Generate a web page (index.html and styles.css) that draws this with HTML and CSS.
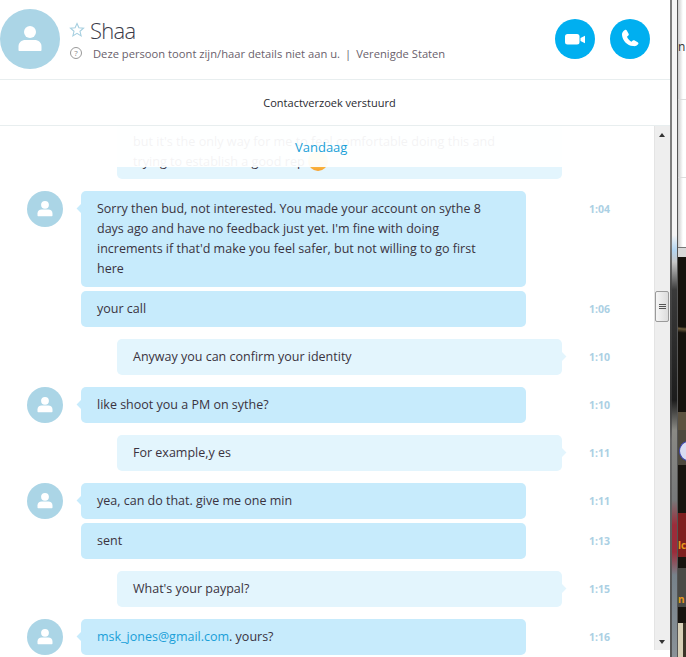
FILE: index.html
```html
<!DOCTYPE html>
<html>
<head>
    <meta charset="UTF-8">
    <title>Shaa</title>
    <link rel="stylesheet" href="styles.css">
</head>
<body>

<div class="window">
    <div class="chat">
        <div class="header">
            <div class="avatar big">
                <svg viewBox="0 0 60 60" width="60" height="60"><circle cx="30" cy="30" r="30" fill="#abd5e6"/><circle cx="30" cy="23" r="6" fill="#fff"/><path d="M18.5 41v-3.500c0-4 3-6.500 7-6.500h9c4 0 7 2.500 7 6.500V41c0 .6-.4 1-1 1h-21c-.6 0-1-.4-1-1z" fill="#fff"/></svg>
            </div>
            <div class="info">
                <div class="name-row">
                    <svg class="star" viewBox="0 0 16 16" width="16" height="16"><path d="M8 1.500l1.900 4.300 4.600.4-3.500 3.100 1.100 4.600L8 11.400l-4.100 2.500L5 9.300 1.500 6.200l4.600-.4z" fill="none" stroke="#a6cfe0" stroke-width="1.100"/></svg>
                    <span class="name">Shaa</span>
                </div>
                <div class="status-row">
                    <span class="help">?</span>
                    <span>Deze persoon toont zijn/haar details niet aan u.</span>
                    <span class="sep">|</span>
                    <span>Verenigde Staten</span>
                </div>
            </div>
            <div class="call-btn">
                <svg viewBox="0 0 40 40" width="40" height="40"><rect x="10" y="15" width="14.500" height="10.500" rx="2.500" fill="#fff"/><path d="M25.500 19l4.500-2.200v7.400L25.500 22z" fill="#fff"/></svg>
            </div>
            <div class="call-btn">
                <svg viewBox="0 0 40 40" width="40" height="40"><path d="M14.800 11c.8-.4 1.600-.2 2 .5l1.800 3.200c.4.700.2 1.400-.3 1.900l-1.300 1.200c.7 2 2.400 3.900 4.400 4.900l1.400-1.100c.6-.5 1.300-.5 1.900-.2l3 1.800c.8.500 1 1.400.4 2.100-1.200 1.400-3 2.200-5 1.800C17 26.500 12.500 21.500 12 16c-.2-2 .9-3.900 2.800-5z" fill="#fff"/></svg>
            </div>
        </div>
        <div class="request">Contactverzoek verstuurd</div>
        <div class="body">
            <div class="messages">
                <div class="earlier">
                    <div class="bubble me tall">but it's the only way for me to feel comfortable doing this and<br>trying to establish a good rep <span class="smiley"></span></div>
                </div>
                <div class="sticky-date">Vandaag</div>

                <div class="row">
                    <div class="avatar small"><svg viewBox="0 0 60 60" width="36" height="36"><circle cx="30" cy="30" r="30" fill="#abd5e6"/><circle cx="30" cy="23" r="6.500" fill="#fff"/><path d="M17.500 41v-3.500c0-4 3-6.500 7-6.500h11c4 0 7 2.500 7 6.500V41c0 .6-.4 1-1 1h-23c-.6 0-1-.4-1-1z" fill="#fff"/></svg></div>
                    <div class="bubble them tail">Sorry then bud, not interested. You made your account on sythe 8 days ago and have no feedback just yet. I'm fine with doing increments if that'd make you feel safer, but not willing to go first here</div>
                    <div class="time">1:04</div>
                </div>
                <div class="row near">
                    <div class="bubble them">your call</div>
                    <div class="time">1:06</div>
                </div>
                <div class="row mine">
                    <div class="bubble me tail">Anyway you can confirm your identity</div>
                    <div class="time">1:10</div>
                </div>
                <div class="row">
                    <div class="avatar small"><svg viewBox="0 0 60 60" width="36" height="36"><circle cx="30" cy="30" r="30" fill="#abd5e6"/><circle cx="30" cy="23" r="6.500" fill="#fff"/><path d="M17.500 41v-3.500c0-4 3-6.500 7-6.500h11c4 0 7 2.500 7 6.500V41c0 .6-.4 1-1 1h-23c-.6 0-1-.4-1-1z" fill="#fff"/></svg></div>
                    <div class="bubble them tail">like shoot you a PM on sythe?</div>
                    <div class="time">1:10</div>
                </div>
                <div class="row mine">
                    <div class="bubble me tail">For example,y es</div>
                    <div class="time">1:11</div>
                </div>
                <div class="row">
                    <div class="avatar small"><svg viewBox="0 0 60 60" width="36" height="36"><circle cx="30" cy="30" r="30" fill="#abd5e6"/><circle cx="30" cy="23" r="6.500" fill="#fff"/><path d="M17.500 41v-3.500c0-4 3-6.500 7-6.500h11c4 0 7 2.500 7 6.500V41c0 .6-.4 1-1 1h-23c-.6 0-1-.4-1-1z" fill="#fff"/></svg></div>
                    <div class="bubble them tail">yea, can do that. give me one min</div>
                    <div class="time">1:11</div>
                </div>
                <div class="row near">
                    <div class="bubble them">sent</div>
                    <div class="time">1:13</div>
                </div>
                <div class="row mine">
                    <div class="bubble me tail">What's your paypal?</div>
                    <div class="time">1:15</div>
                </div>
                <div class="row">
                    <div class="avatar small"><svg viewBox="0 0 60 60" width="36" height="36"><circle cx="30" cy="30" r="30" fill="#abd5e6"/><circle cx="30" cy="23" r="6.500" fill="#fff"/><path d="M17.500 41v-3.500c0-4 3-6.500 7-6.500h11c4 0 7 2.500 7 6.500V41c0 .6-.4 1-1 1h-23c-.6 0-1-.4-1-1z" fill="#fff"/></svg></div>
                    <div class="bubble them tail"><span class="link">msk_jones@gmail.com</span>. yours?</div>
                    <div class="time">1:16</div>
                </div>
            </div>
            <div class="scrollbar">
                <div class="arrow up"></div>
                <div class="track"><div class="thumb"><span></span><span></span><span></span></div></div>
                <div class="arrow down"></div>
            </div>
        </div>
    </div>
    <div class="edge"></div>
    <div class="glass"></div>
    <div class="edge-dark"></div>
    <!-- other windows showing behind the chat -->
    <div class="behind">
        <div class="pane first">n</div>
        <div class="pane second"></div>
        <div class="pane third"></div>
        <div class="pane band"></div>
        <div class="game-dark"></div>
        <div class="game-tan"></div>
        <div class="game-grey"><div class="badge"></div></div>
        <div class="game-black"></div>
        <div class="game-red"><span class="game-label">lc</span></div>
        <div class="game-gap"></div>
        <div class="game-slate"><span class="game-label">n</span></div>
        <div class="game-black short"></div>
        <div class="game-tile"></div>
    </div>
</div>

</body>
</html>
```

FILE: styles.css
```css
html, body {
    margin: 0;
    height: 100%;
    overflow: hidden;
}
body {
    font-family: "Open Sans", "Noto Sans", sans-serif;
    font-size: 12.5px;
    color: #3a3340;
    background-color: #fff;
}
.window {
    display: flex;
    width: 686px;
    height: 657px;
}
.chat {
    display: flex;
    flex-direction: column;
    width: 670px;
    height: 657px;
    flex: none;
    background-color: #fff;
}
.header {
    display: flex;
    align-items: center;
    height: 80px;
    box-sizing: border-box;
    border-bottom: 1px solid #e8eeef;
    padding: 0 20px 0 0;
    flex: none;
}
.avatar svg {
    display: block;
}
.avatar.big {
    width: 60px;
    height: 60px;
    margin-top: -1px;
}
.info {
    flex: 1;
    margin-left: 9px;
}
.name-row {
    display: flex;
    align-items: center;
    margin-top: -2px;
}
.star {
    margin-right: 5px;
}
.name {
    font-weight: 300;
    font-size: 22px;
    letter-spacing: -0.75px;
    line-height: 26px;
    color: #3a3a48;
}
.status-row {
    display: flex;
    align-items: center;
    margin-top: 3px;
    font-size: 11.2px;
    color: #6a5f6c;
}
.sep {
    margin: 0 5px;
}
.help {
    width: 10px;
    height: 10px;
    border: 1px solid #999;
    border-radius: 50%;
    font-size: 8px;
    line-height: 10px;
    text-align: center;
    color: #888;
    margin-left: 1px;
    margin-right: 11px;
}
.call-btn {
    width: 40px;
    height: 40px;
    border-radius: 50%;
    background-color: #00aff0;
    margin-left: 15px;
    margin-top: -1px;
}
.request {
    height: 46px;
    box-sizing: border-box;
    border-bottom: 1px solid #e8eeef;
    padding-right: 11px;
    text-align: center;
    font-size: 11px;
    line-height: 46px;
    color: #2a2a30;
    flex: none;
}
.body {
    display: flex;
    flex: 1;
    min-height: 0;
}
.messages {
    position: relative;
    flex: 1;
    overflow: hidden;
    min-width: 0;
}
.earlier {
    display: flex;
    align-items: flex-end;
    height: 53px;
    padding-left: 117px;
    margin-bottom: 12px;
}
.bubble.tall {
    flex: none;
    font-size: 12.65px;
    white-space: nowrap;
}
.smiley {
    display: inline-block;
    width: 20px;
    height: 20px;
    border-radius: 50%;
    background: linear-gradient(to bottom, #fbd75b 40%, #f9a02c);
    vertical-align: -5px;
}
/* washes out the message scrolling under the date */
.sticky-date {
    position: absolute;
    left: 0;
    right: 0;
    top: 0;
    height: 41px;
    box-sizing: border-box;
    padding: 11px 0 0 295px;
    background-color: rgba(255, 255, 255, 0.94);
    font-size: 13px;
    line-height: 20px;
    color: #1a9fd8;
}
.row {
    display: flex;
    align-items: flex-start;
    position: relative;
    padding-left: 81px;
    margin-bottom: 12px;
}
.row.near {
    margin-top: -8px;
}
.row.mine {
    padding-left: 117px;
}
.avatar.small {
    position: absolute;
    left: 27px;
    top: 0;
    width: 36px;
    height: 36px;
}
.bubble {
    position: relative;
    box-sizing: border-box;
    width: 445px;
    padding: 8px 30px 8px 16px;
    line-height: 20px;
    border-radius: 5px;
}
.them {
    background-color: #c7ebfc;
}
.me {
    background-color: #e3f5fd;
}
.tail::before {
    content: "";
    position: absolute;
    top: 14px;
    width: 7px;
    height: 7px;
    transform: rotate(45deg);
    background-color: inherit;
}
.them.tail::before {
    left: -3px;
}
.me.tail::before {
    right: -3px;
}
.link {
    color: #1a9fd8;
}
.time {
    position: absolute;
    left: 589px;
    top: 11px;
    font-size: 10.5px;
    font-weight: 700;
    line-height: 14px;
    color: #abd0e4;
}
.scrollbar {
    display: flex;
    flex-direction: column;
    width: 16px;
    box-sizing: border-box;
    flex: none;
    background-color: #eee;
    border-left: 1px solid #e4e4e4;
    margin-bottom: 7px;
}
.arrow {
    height: 17px;
    flex: none;
    position: relative;
}
.arrow::after {
    content: "";
    position: absolute;
    left: 4px;
    top: 7px;
    border-left: 3px solid transparent;
    border-right: 3px solid transparent;
}
.arrow.up::after {
    border-bottom: 4px solid #333;
}
.arrow.down::after {
    border-top: 4px solid #333;
}
.track {
    flex: 1;
    position: relative;
}
.thumb {
    position: absolute;
    top: 148px;
    left: 0;
    width: 14px;
    height: 31px;
    box-sizing: border-box;
    border: 1px solid #9a9a9a;
    border-radius: 2px;
    background: linear-gradient(to right, #f5f5f5, #dcdcdc);
    display: flex;
    flex-direction: column;
    justify-content: center;
    align-items: center;
    gap: 1px;
}
.thumb span {
    display: block;
    width: 7px;
    height: 1px;
    background-color: #555;
}
.edge {
    width: 2px;
    flex: none;
    background: linear-gradient(to bottom, #7d7d7d 245px, #444 290px, #333 400px, #666 440px, #555 600px);
}
.glass {
    width: 5px;
    flex: none;
    background: linear-gradient(to bottom, #f4f4f4 235px, #b4d6f2 250px, #c8c8c8 262px, #3a3a3a 290px, #1c1c1c 400px, #8a8a85 430px, #77797a 500px, #9c2c3a 525px, #9c2c3a 552px, #77828a 575px, #8a9298 657px);
}
.edge-dark {
    width: 1px;
    flex: none;
    background-color: #555;
}
.behind {
    flex: 1;
    display: flex;
    flex-direction: column;
    min-width: 0;
    overflow: hidden;
}
.pane {
    box-sizing: border-box;
    flex: none;
    background: linear-gradient(to right, #ccc, #fff 5px);
    border-bottom: 1px solid #ddd;
}
.pane.first {
    height: 100px;
    padding-top: 39px;
    font-size: 12px;
    line-height: 16px;
    color: #333;
}
.pane.second {
    height: 78px;
}
.pane.third {
    height: 70px;
    border-bottom-color: #777;
}
.pane.band {
    height: 9px;
    border-bottom: none;
    background: #d8d8d8;
}
.game-dark {
    height: 155px;
    flex: none;
    background: radial-gradient(circle at 100% 30px, #15120d 40px, #6b5a3c 42px, #15120d 46px);
}
.game-tan {
    height: 18px;
    flex: none;
    background-color: #5c5240;
}
.game-grey {
    height: 35px;
    flex: none;
    padding-top: 11px;
    box-sizing: border-box;
    background-color: #4d493e;
}
.badge {
    width: 18px;
    height: 20px;
    margin-left: 1px;
    border-radius: 50%;
    background-color: #d8dcf0;
    border: 1px solid #3b45b0;
    box-sizing: border-box;
}
.game-black {
    height: 48px;
    flex: none;
    background-color: #17140f;
}
.game-black.short {
    height: 16px;
}
.game-red {
    height: 44px;
    flex: none;
    box-sizing: border-box;
    padding-top: 26px;
    background-color: #7e1f1f;
}
.game-gap {
    height: 11px;
    flex: none;
    background-color: #17140f;
}
.game-slate {
    height: 39px;
    flex: none;
    box-sizing: border-box;
    padding-top: 25px;
    background-color: #4a4a46;
}
.game-label {
    display: block;
    font-size: 10px;
    font-weight: 700;
    line-height: 12px;
    color: #e89a1c;
    white-space: nowrap;
}
.game-tile {
    flex: 1;
    background: linear-gradient(to right, #d8d0b8 5px, #3a3428 5px);
}
```
